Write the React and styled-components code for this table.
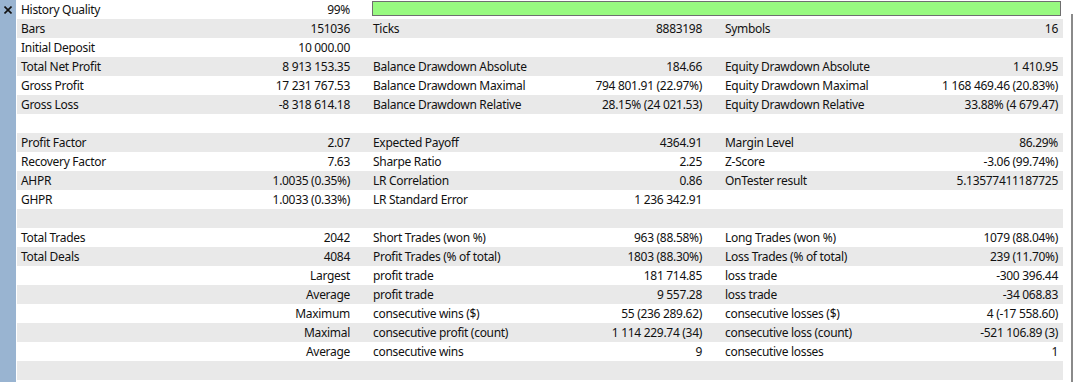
import React from 'react';
import styled, {createGlobalStyle} from "styled-components";

const Global = createGlobalStyle`
html, body {
  margin: 0;
  padding: 0;
  background: #fff;
}
body {
  font-family: "Noto Sans", "Open Sans", sans-serif;
  font-size: 12px;
  letter-spacing: -0.3px;
  color: #111;
}
`

const Window = styled.div`
display: flex;
width: 1074px;
height: 382px;
overflow: hidden;
background: #fff;
`

const SideBar = styled.div`
width: 16px;
flex: none;
background: #99b4d1;
margin-right: 1px;
display: flex;
justify-content: center;
padding-top: 6px;
box-sizing: border-box;
`

const CloseIcon = styled.svg`
width: 8px;
height: 8px;
display: block;
`

const Table = styled.div`
width: 1046px;
flex: none;
display: flex;
flex-direction: column;
`

const Row = styled.div`
display: grid;
grid-template-columns: 352px 352px 1fr;
height: 19px;
background: ${({shade}) => shade ? "#e9e9e9" : "#fff"};
`

const Pair = styled.div`
display: flex;
align-items: center;
justify-content: space-between;
padding: 0 ${({last}) => last ? "5px" : "19px"} 0 4px;
white-space: nowrap;
line-height: 18px;
`

const Label = styled.span``

const Value = styled.span`
text-align: right;
margin-left: auto;
`

const BarCell = styled.div`
grid-column: 2 / 4;
padding: 1px 2px 3px 3px;
`

const QualityBar = styled.div`
height: 100%;
box-sizing: border-box;
border: 1px solid #6f6f6f;
background: #98fa80;
`

const Gutter = styled.div`
flex: 1;
display: flex;
padding: 14px 1px 0 8px;
`

const Thumb = styled.div`
width: 2px;
background: #8a8a8a;
`

const rows = [
    [["Bars", "151036"], ["Ticks", "8883198"], ["Symbols", "16"]],
    [["Initial Deposit", "10 000.00"]],
    [["Total Net Profit", "8 913 153.35"], ["Balance Drawdown Absolute", "184.66"], ["Equity Drawdown Absolute", "1 410.95"]],
    [["Gross Profit", "17 231 767.53"], ["Balance Drawdown Maximal", "794 801.91 (22.97%)"], ["Equity Drawdown Maximal", "1 168 469.46 (20.83%)"]],
    [["Gross Loss", "-8 318 614.18"], ["Balance Drawdown Relative", "28.15% (24 021.53)"], ["Equity Drawdown Relative", "33.88% (4 679.47)"]],
    [],
    [["Profit Factor", "2.07"], ["Expected Payoff", "4364.91"], ["Margin Level", "86.29%"]],
    [["Recovery Factor", "7.63"], ["Sharpe Ratio", "2.25"], ["Z-Score", "-3.06 (99.74%)"]],
    [["AHPR", "1.0035 (0.35%)"], ["LR Correlation", "0.86"], ["OnTester result", "5.13577411187725"]],
    [["GHPR", "1.0033 (0.33%)"], ["LR Standard Error", "1 236 342.91"]],
    [],
    [["Total Trades", "2042"], ["Short Trades (won %)", "963 (88.58%)"], ["Long Trades (won %)", "1079 (88.04%)"]],
    [["Total Deals", "4084"], ["Profit Trades (% of total)", "1803 (88.30%)"], ["Loss Trades (% of total)", "239 (11.70%)"]],
    [["", "Largest"], ["profit trade", "181 714.85"], ["loss trade", "-300 396.44"]],
    [["", "Average"], ["profit trade", "9 557.28"], ["loss trade", "-34 068.83"]],
    [["", "Maximum"], ["consecutive wins ($)", "55 (236 289.62)"], ["consecutive losses ($)", "4 (-17 558.60)"]],
    [["", "Maximal"], ["consecutive profit (count)", "1 114 229.74 (34)"], ["consecutive loss (count)", "-521 106.89 (3)"]],
    [["", "Average"], ["consecutive wins", "9"], ["consecutive losses", "1"]],
    [],
];

const App = () => {
    return (
        <>
            <Global/>
            <Window>
                <SideBar>
                    <CloseIcon viewBox="0 0 8 8">
                        <path d="M0.5 0.5 L7.5 7.5 M7.5 0.5 L0.5 7.5" stroke="#111" strokeWidth="1.6"/>
                    </CloseIcon>
                </SideBar>
                <Table>
                    <Row>
                        <Pair>
                            <Label>History Quality</Label>
                            <Value>99%</Value>
                        </Pair>
                        <BarCell>
                            <QualityBar/>
                        </BarCell>
                    </Row>
                    {rows.map((cells, i) => (
                        <Row key={i} shade={i % 2 === 0 ? 1 : 0}>
                            {[0, 1, 2].map(j => (
                                <Pair key={j} last={j === 2 ? 1 : 0}>
                                    <Label>{cells[j] ? cells[j][0] : ""}</Label>
                                    <Value>{cells[j] ? cells[j][1] : ""}</Value>
                                </Pair>
                            ))}
                        </Row>
                    ))}
                </Table>
                <Gutter>
                    <Thumb/>
                </Gutter>
            </Window>
        </>
    );
};

export default App;
